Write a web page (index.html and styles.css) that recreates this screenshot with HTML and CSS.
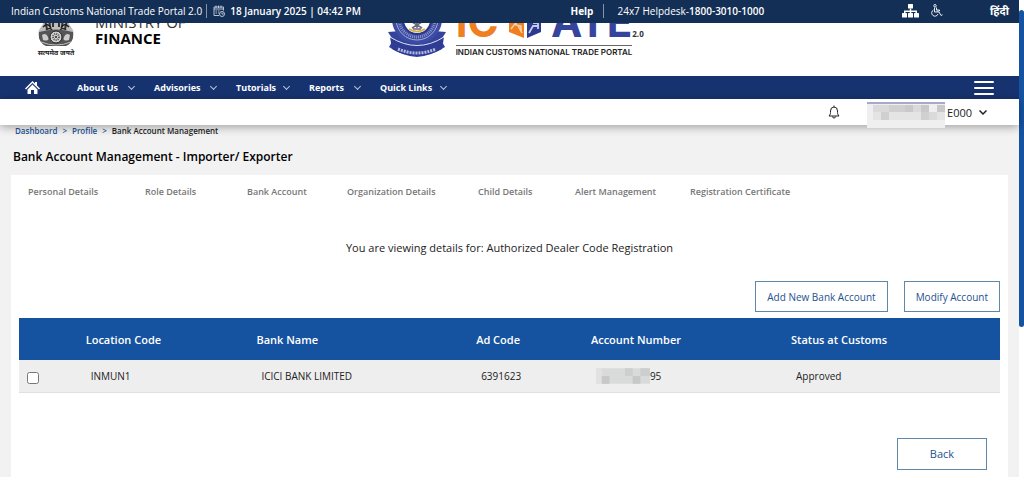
FILE: index.html
```html
<!DOCTYPE html>
<html lang="en">
<head>
    <meta charset="UTF-8">
    <meta name="viewport" content="width=device-width, initial-scale=1.0">
    <title>Bank Account Management - ICEGATE</title>
    <link rel="stylesheet" href="styles.css">
</head>
<body>
    <div class="page">
        <div class="topbar">
            <div class="topbar-left">
                <span class="portal-name">Indian Customs National Trade Portal 2.0</span>
                <svg class="icon-calendar" viewBox="0 0 24 24" fill="none" stroke="#c9d3e2" stroke-width="1.8">
                    <path d="M21 11V4H2v17h10M2 8h19M6 1v5M11 1v5M16 1v5M5 12h3M10 12h3M5 16h3M10 16h2"/>
                    <circle cx="18" cy="18" r="5"/>
                    <path d="M18 15v3h3"/>
                </svg>
                <strong class="date">18 January 2025 | 04:42 PM</strong>
            </div>
            <div class="topbar-help">
                <a class="help-link" href="#">Help</a>
                <span class="helpdesk">24x7 Helpdesk-<b>1800-3010-1000</b></span>
            </div>
            <div class="topbar-right">
                <a href="#" aria-label="Sitemap">
                    <svg class="icon-sitemap" viewBox="0 0 34 28" fill="#fff">
                        <rect x="12" y="0" width="10" height="9" rx="1"/>
                        <path d="M15.500 9h3v4H30v6h-3v-3h-8.500v3h-3v-3H7v3H4v-6h11.500z"/>
                        <rect x="0" y="18" width="10" height="9" rx="1"/>
                        <rect x="12" y="18" width="10" height="9" rx="1"/>
                        <rect x="24" y="18" width="10" height="9" rx="1"/>
                    </svg>
                </a>
                <a href="#" aria-label="Accessibility">
                    <svg class="icon-access" viewBox="0 0 24 26" fill="none" stroke="#e4e9f1" stroke-width="2">
                        <circle cx="8" cy="3.500" r="2.500"/>
                        <path d="M7 7v9h9l4 7 3-1.500M11 7v5h6v2h-6"/>
                        <path d="M5 12a6.500 6.500 0 1 0 9 8"/>
                    </svg>
                </a>
                <a class="lang" href="#" lang="hi">हिंदी</a>
            </div>
        </div>

        <header class="brand">
            <div class="ministry">
                <div class="emblem">
                    <svg viewBox="0 0 38 40">
                        <path d="M6 16C5 6 12 2 19 2s14 4 13 14l4 6c2 5-1 12-5 15H7c-4-3-7-10-5-15z" fill="#bdbdbd"/>
                        <path d="M8 12l2 9M12 9l1 10M16 11v8M22 11v8M26 9l-1 10M30 12l-2 9" stroke="#333" stroke-width="2"/>
                        <path d="M6 19q5-5 8 1M24 20q3-6 8-1M9 22q4-3 6 0M23 22q3-3 6 0" stroke="#222" stroke-width="1.500" fill="none"/>
                        <path d="M2 24q17-5 34 0v6q-2 6-7 8H9q-5-2-7-8z" fill="#555"/>
                        <circle cx="19" cy="29" r="6" fill="#d0d0d0" stroke="#222" stroke-width="1"/>
                        <circle cx="19" cy="29" r="3" fill="none" stroke="#555" stroke-width="2" stroke-dasharray="1 1"/>
                        <circle cx="19" cy="29" r="1" fill="#222"/>
                        <path d="M5 27q4-3 6 2t-5 3zM33 27q-4-3-6 2t5 3z" fill="#ccc"/>
                        <path d="M4 34q15 6 30 0" stroke="#bbb" stroke-width="1" fill="none"/>
                    </svg>
                    <span class="motto" lang="hi">सत्यमेव जयते</span>
                </div>
                <div class="ministry-name">
                    <span>MINISTRY OF</span>
                    <strong>FINANCE</strong>
                </div>
            </div>
            <div class="icegate">
                <svg class="seal" viewBox="0 0 60 58">
                    <path d="M1 32L13 31 47 31 59 32 54 40 58 47Q44 56 30 57 15 56 2 47L6 40z" fill="#34439c"/>
                    <circle cx="30" cy="19" r="25" fill="#3c4ba3"/>
                    <circle cx="30" cy="19" r="21" fill="none" stroke="#a3abd5" stroke-width="1"/>
                    <circle cx="30" cy="19" r="18" fill="none" stroke="#8b95c8" stroke-width="3" stroke-dasharray="1 1"/>
                    <circle cx="30" cy="20" r="14" fill="#fff" stroke="#2b3788" stroke-width="2"/>
                    <path d="M24 18h12M25 22l10 6M35 22l-10 6M26 29h8M30 14v14" stroke="#68697e" stroke-width="1.500"/>
                    <path d="M22 29q8 5 16 0" stroke="#d8b04a" stroke-width="2" fill="none"/>
                    <path d="M3 37q27 17 54 0l-2 12q-25 14-50 0z" fill="#2e3c94"/>
                    <path d="M3 37q27 17 54 0" stroke="#dfe2f2" stroke-width="1" fill="none"/>
                    <path d="M11 49q19 8 38 0" stroke="#b4bbdf" stroke-width="3" stroke-dasharray="2 1" fill="none"/>
                </svg>
                <div class="wordmark">
                    <div class="wordmark-row">
                        <span class="word-ice">IC</span>
                        <svg class="gate" viewBox="0 0 32 40">
                            <path d="M0 6l15-5v38L0 33z" fill="#f07f22"/>
                            <path d="M4 17l8-2v6l-5 1v4l5 1v5M2 30l7-9M9 27l4 7" stroke="#fbd1a4" stroke-width="1.500" fill="none"/>
                            <path d="M32 6L18 1v38l14-6z" fill="#2b398f"/>
                            <path d="M21 18h4v6h4v6M20 34l4-7h6M29 18v4" stroke="#c5cce8" stroke-width="1.800" fill="none"/>
                        </svg>
                        <span class="word-gate">ATE</span>
                    </div>
                    <div class="tagline">INDIAN CUSTOMS NATIONAL TRADE PORTAL</div>
                </div>
                <span class="version">2.0</span>
            </div>
        </header>

        <nav class="navbar">
            <a class="home" href="#" aria-label="Home">
                <svg viewBox="0 0 30 26" fill="#fff">
                    <path d="M15 0l5 5V2h4v7l6 6-2 2L15 4 2 17l-2-2z"/>
                    <path d="M15 7l10 10v9h-7v-8h-6v8H5v-9z"/>
                </svg>
            </a>
            <a class="nav-item nav-about" href="#">About Us <i class="chevron"></i></a>
            <a class="nav-item nav-advisories" href="#">Advisories <i class="chevron"></i></a>
            <a class="nav-item nav-tutorials" href="#">Tutorials <i class="chevron"></i></a>
            <a class="nav-item nav-reports" href="#">Reports <i class="chevron"></i></a>
            <a class="nav-item nav-links" href="#">Quick Links <i class="chevron"></i></a>
            <button class="menu-button" type="button" aria-label="Menu"><span></span><span></span><span></span></button>
        </nav>

        <div class="userbar">
            <svg class="icon-bell" viewBox="0 0 24 28" fill="none" stroke="#222" stroke-width="2">
                <path d="M12 1v3M2 22c3-3 3-6 3-10a7 8 0 0 1 14 0c0 4 0 7 3 10zM9 23a3 3 0 0 0 6 0"/>
            </svg>
            <button class="user" type="button">
                <svg class="user-mask" viewBox="0 0 78 26">
                    <rect width="78" height="26" fill="#efefef"/>
                    <rect width="78" height="2" fill="#a5a9cb"/>
                    <path d="M6 3h16v7H6zM46 3h8v7h-8zM62 10h8v8h-8z" fill="#dadada"/>
                    <path d="M22 3h16v7H22zM14 10h8v8h-8zM54 10h8v8h-8z" fill="#d0d0d0"/>
                    <path d="M38 3h8v7h-8zM54 3h8v7h-8zM70 3h8v7h-8z" fill="#c9c9cc"/>
                    <path d="M6 10h8v8H6zM22 10h32v8H22zM70 10h8v8h-8z" fill="#e4e4e4"/>
                </svg>
                <span>E000</span>
                <svg class="user-chevron" viewBox="0 0 16 10" fill="none" stroke="#222" stroke-width="3">
                    <path d="M1 1l7 7 7-7"/>
                </svg>
            </button>
        </div>

        <main class="content">
            <div class="breadcrumb">
                <a href="#">Dashboard</a><span class="sep">&gt;</span><a href="#">Profile</a><span class="sep">&gt;</span><span>Bank Account Management</span>
            </div>
            <h1>Bank Account Management - Importer/ Exporter</h1>

            <div class="card">
                <div class="tabs">
                    <a href="#">Personal Details</a>
                    <a href="#">Role Details</a>
                    <a href="#">Bank Account</a>
                    <a href="#">Organization Details</a>
                    <a href="#">Child Details</a>
                    <a href="#">Alert Management</a>
                    <a href="#">Registration Certificate</a>
                </div>
                <p class="viewing">You are viewing details for: Authorized Dealer Code Registration</p>
                <div class="actions">
                    <button class="btn" type="button">Add New Bank Account</button>
                    <button class="btn" type="button">Modify Account</button>
                </div>
                <table class="accounts">
                    <colgroup>
                        <col class="col-check">
                        <col class="col-location">
                        <col class="col-bank">
                        <col class="col-code">
                        <col class="col-number">
                        <col class="col-status">
                    </colgroup>
                    <thead>
                        <tr>
                            <th></th>
                            <th>Location Code</th>
                            <th>Bank Name</th>
                            <th>Ad Code</th>
                            <th>Account Number</th>
                            <th>Status at Customs</th>
                        </tr>
                    </thead>
                    <tbody>
                        <tr>
                            <td class="check"><input type="checkbox" aria-label="Select INMUN1"></td>
                            <td>INMUN1</td>
                            <td>ICICI BANK LIMITED</td>
                            <td>6391623</td>
                            <td>
                                <div class="masked">
                                    <svg class="number-mask" viewBox="0 0 56 16">
                                        <rect width="56" height="16" fill="#d9dada"/>
                                        <path d="M0 0h6v16H0z" fill="#e2e2e2"/>
                                        <path d="M6 8h8v8H6zM38 8h8v8h-8z" fill="#c8c8c8"/>
                                        <path d="M30 0h8v8h-8zM46 0h10v8H46z" fill="#cdcfcf"/>
                                    </svg>
                                    <span>95</span>
                                </div>
                            </td>
                            <td>Approved</td>
                        </tr>
                    </tbody>
                </table>
                <div class="footer-actions">
                    <button class="btn btn-back" type="button">Back</button>
                </div>
            </div>
        </main>
    </div>
    <div class="scrollbar"><div class="scrollbar-thumb"></div></div>
</body>
</html>
```
FILE: styles.css
```css
* {
    box-sizing: border-box;
}
body {
    margin: 0;
    display: flex;
    align-items: flex-start;
    min-height: 100vh;
    background-color: #fff;
    color: #222;
    font-family: "Open Sans", "Noto Sans", sans-serif;
    font-size: 10px;
}
a {
    color: inherit;
    text-decoration: none;
}
svg {
    display: block;
}
button {
    font-family: inherit;
    cursor: pointer;
}
.page {
    flex: 1;
    min-width: 0;
}

/* Top bar */
.topbar {
    display: flex;
    align-items: center;
    height: 23px;
    padding: 0 10px 2px 11px;
    background-color: #132f55;
    color: #fff;
}
.topbar-left,
.topbar-help,
.topbar-right {
    display: flex;
    align-items: center;
}
.topbar-left {
    flex: 1;
}
.portal-name {
    padding-right: 4px;
    border-right: 1px solid #8494ad;
}
.icon-calendar {
    width: 12px;
    height: 12px;
    margin: 0 5px 0 6px;
}
.date {
    font-weight: 600;
}
.help-link {
    font-weight: 700;
    padding-right: 10px;
    border-right: 1px solid #8494ad;
}
.helpdesk {
    padding-left: 13px;
}
.helpdesk b {
    font-weight: 600;
}
.topbar-right {
    margin-left: 138px;
}
.icon-sitemap {
    width: 17px;
    height: 14px;
}
.icon-access {
    width: 12px;
    height: 13px;
    margin-left: 12px;
}
.lang {
    margin-left: 47px;
    font-size: 11px;
    line-height: 14px;
    font-weight: 700;
}

/* Logos */
.brand {
    display: flex;
    align-items: flex-end;
    height: 53px;
    padding: 0 37px 18px;
    overflow: hidden;
}
.ministry {
    display: flex;
    align-items: flex-end;
    width: 37%;
    min-width: 200px;
}
.emblem {
    width: 38px;
    flex-shrink: 0;
}
.motto {
    display: block;
    font-size: 7px;
    line-height: 10px;
    font-weight: 700;
    text-align: center;
    white-space: nowrap;
}
.ministry-name {
    padding: 0 0 12px 20px;
    font-size: 15px;
    line-height: 16px;
    color: #333;
}
.ministry-name span,
.ministry-name strong {
    display: block;
}
.ministry-name strong {
    color: #000;
}
.icegate {
    display: flex;
    align-items: flex-end;
}
.seal {
    width: 60px;
    height: 58px;
}
.wordmark {
    margin-left: 9px;
}
.wordmark-row {
    display: flex;
    align-items: flex-end;
    justify-content: space-between;
    height: 40px;
    font-family: Inter, sans-serif;
    font-size: 42px;
    line-height: 34px;
    font-weight: 700;
}
.word-ice {
    color: #f07f22;
}
.gate {
    width: 32px;
    height: 40px;
}
.word-gate {
    color: #36459c;
}
.version {
    padding-bottom: 19px;
    font-size: 8px;
    line-height: 10px;
    font-weight: 700;
    color: #333;
}
.tagline {
    margin-top: 6px;
    border-top: 1px solid #666;
    font-family: Inter, sans-serif;
    font-size: 8px;
    line-height: 12px;
    font-weight: 600;
    color: #222;
}

/* Navigation */
.navbar {
    display: flex;
    align-items: center;
    height: 23px;
    padding: 0 25px;
    background-color: #17336f;
    color: #fff;
    font-size: 9px;
    font-weight: 700;
}
.home {
    width: 15px;
    margin-right: 37px;
}
.nav-item {
    display: flex;
    justify-content: space-between;
    align-items: center;
    margin-right: 19px;
    white-space: nowrap;
}
.nav-about {
    width: 58px;
}
.nav-advisories {
    width: 63px;
}
.nav-tutorials {
    width: 54px;
}
.nav-reports {
    width: 52px;
}
.nav-links {
    width: 67px;
}
.chevron {
    width: 5px;
    height: 5px;
    margin: 0 1px 3px;
    border: solid #b8c3dc;
    border-width: 0 1px 1px 0;
    transform: rotate(45deg);
}
.menu-button {
    display: flex;
    flex-direction: column;
    gap: 4px;
    width: 20px;
    margin-left: auto;
    padding: 0;
    border: none;
    background: none;
}
.menu-button span {
    height: 2px;
    border-radius: 1px;
    background-color: #fff;
}

/* User bar */
.userbar {
    position: relative;
    display: flex;
    justify-content: flex-end;
    align-items: center;
    height: 26px;
    padding-right: 32px;
    background-color: #fff;
    box-shadow: 0 2px 10px rgba(0, 0, 0, 0.35);
}
.icon-bell {
    width: 12px;
    height: 14px;
    margin-right: 27px;
}
.user {
    display: flex;
    align-items: center;
    height: 26px;
    padding: 0;
    border: none;
    background: none;
    color: #222;
    font-size: 11px;
}
.user-mask {
    width: 78px;
    height: 26px;
    margin: 5px 2px 0 0;
}
.user-chevron {
    width: 8px;
    height: 5px;
    margin-left: 7px;
}

/* Content */
.content {
    padding: 0 11px;
    background-color: #f2f2f2;
}
.breadcrumb {
    display: flex;
    padding-left: 4px;
    font-size: 8px;
    line-height: 12px;
    font-weight: 600;
}
.breadcrumb a {
    color: #1d5498;
}
.breadcrumb .sep {
    padding: 0 5px;
    color: #1d5498;
}
h1 {
    margin: 0;
    padding: 11px 2px 10px;
    font-size: 12px;
    line-height: 17px;
    font-weight: 600;
    color: #000;
}
.card {
    padding: 0 8px 7px;
    background-color: #fff;
}
.tabs {
    display: grid;
    grid-template-columns: 117fr 102fr 100fr 131fr 97fr 115fr 310fr;
    padding: 10px 0 0 9px;
    font-size: 9px;
    line-height: 13px;
    font-weight: 600;
    color: #777;
}
.viewing {
    margin: 0;
    padding: 42px 0 25px;
    font-size: 11px;
    line-height: 16px;
    text-align: center;
}
.actions {
    display: flex;
    justify-content: flex-end;
    gap: 16px;
    margin-bottom: 6px;
}
.btn {
    height: 31px;
    padding: 0 11px;
    border: 1px solid #5f87a8;
    background-color: #fff;
    color: #1d5290;
    font-size: 10px;
}
.accounts {
    width: 100%;
    table-layout: fixed;
    border-collapse: collapse;
    text-align: left;
}
.col-check {
    width: 6.8%;
}
.col-location {
    width: 17.4%;
}
.col-bank {
    width: 22.4%;
}
.col-code {
    width: 11.7%;
}
.col-number {
    width: 20.4%;
}
.accounts th {
    height: 42px;
    padding: 0;
    background-color: #1553a1;
    color: #fff;
    font-size: 11px;
    font-weight: 600;
}
.accounts td {
    height: 32px;
    padding: 0 0 0 5px;
    border-bottom: 1px solid #e0e0e0;
    background-color: #eee;
    font-size: 10px;
}
.accounts .check {
    padding-left: 8px;
}
.check input {
    display: block;
    width: 12px;
    height: 12px;
    margin: 4px 0 0;
}
.masked {
    display: flex;
    align-items: center;
}
.number-mask {
    width: 54px;
    height: 16px;
}
.footer-actions {
    display: flex;
    justify-content: flex-end;
    padding: 45px 13px 0 0;
}
.btn-back {
    width: 90px;
    height: 32px;
    font-size: 11px;
}

/* Page scrollbar */
.scrollbar {
    width: 5px;
    padding-top: 10px;
}
.scrollbar-thumb {
    height: 317px;
    border-radius: 3px;
    background-color: #1553a1;
}
```
